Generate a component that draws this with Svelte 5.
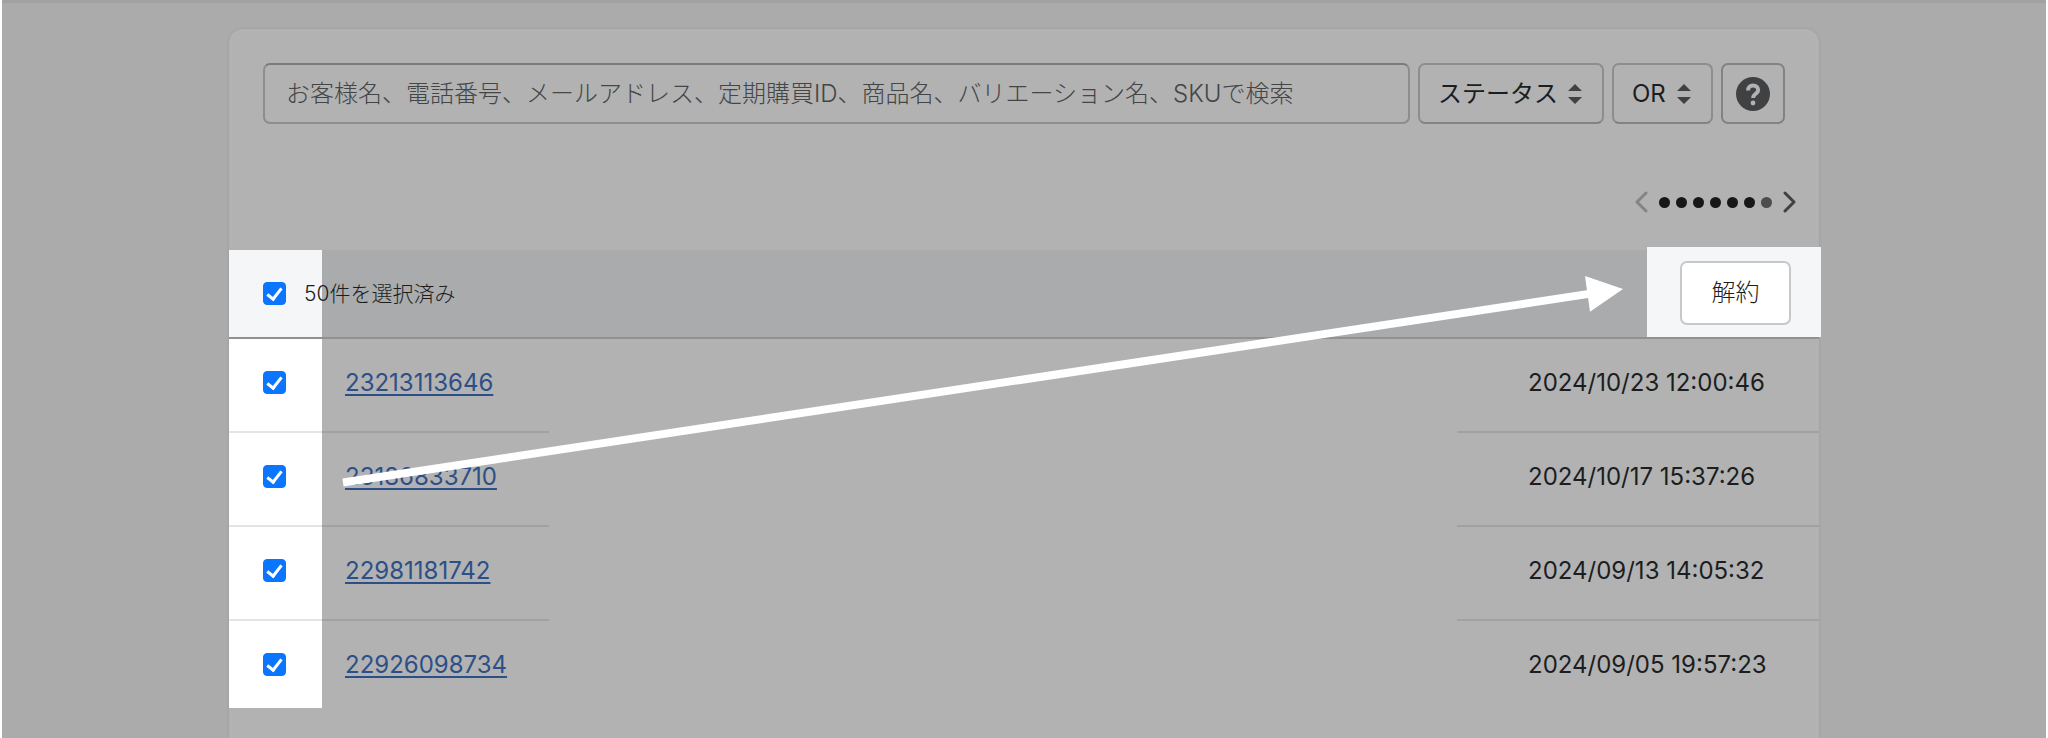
<script lang="ts">
  interface Order {
    id: string;
    date: string;
    checked: boolean;
  }

  let allChecked = $state(true);
  let query = $state('');
  let orders: Order[] = $state([
    { id: '23213113646', date: '2024/10/23 12:00:46', checked: true },
    { id: '23186833710', date: '2024/10/17 15:37:26', checked: true },
    { id: '22981181742', date: '2024/09/13 14:05:32', checked: true },
    { id: '22926098734', date: '2024/09/05 19:57:23', checked: true },
  ]);

  // last dot is the faded one
  const DOTS = [0, 1, 2, 3, 4, 5, 6];

  function toggleAll() {
    orders.forEach((o) => (o.checked = allChecked));
  }
</script>

{#snippet selectIcon()}
  <svg class="select-icon" viewBox="0 0 14 22" aria-hidden="true">
    <path d="M7 1 14 8H0zM7 21 0 14h14z" />
  </svg>
{/snippet}

<div class="page">
  <main class="card">
    <div class="filters">
      <input
        class="search"
        type="text"
        bind:value={query}
        aria-label="検索"
        placeholder="お客様名、電話番号、メールアドレス、定期購買ID、商品名、バリエーション名、SKUで検索"
      />
      <div class="select-wrap status">
        <select aria-label="ステータス"><option>ステータス</option></select>
        {@render selectIcon()}
      </div>
      <div class="select-wrap operator">
        <select aria-label="条件"><option>OR</option></select>
        {@render selectIcon()}
      </div>
      <button class="help" aria-label="ヘルプ">
        <svg viewBox="0 0 34 34" aria-hidden="true">
          <circle cx="17" cy="17" r="17" />
          <path class="mark" d="M12 13.6C12 10.4 14 8.4 17 8.4s5.2 1.8 5.2 4.6c0 3.8-5.2 3.8-5.2 8" />
          <circle class="point" cx="17" cy="26" r="2.4" />
        </svg>
      </button>
    </div>

    <nav class="pager" aria-label="ページ">
      <button class="chevron" disabled aria-label="前へ">
        <svg viewBox="0 0 14 22" aria-hidden="true"><path d="M12 2 3 11l9 9" /></svg>
      </button>
      <div class="dots">
        {#each DOTS as dot}
          <span class="dot" class:faded={dot === DOTS.length - 1}></span>
        {/each}
      </div>
      <button class="chevron" aria-label="次へ">
        <svg viewBox="0 0 14 22" aria-hidden="true"><path d="m2 2 9 9-9 9" /></svg>
      </button>
    </nav>

    <section class="list">
      <div class="bulk-bar">
        <label class="bulk-label">
          <input class="check" type="checkbox" bind:checked={allChecked} onchange={toggleAll} />
          50件を選択済み
        </label>
        <div class="bulk-action">
          <button class="cancel">解約</button>
        </div>
      </div>

      <table>
        <tbody>
          {#each orders as order}
            <tr>
              <td class="col-check">
                <input class="check" type="checkbox" bind:checked={order.checked} aria-label={order.id} />
              </td>
              <td class="col-id"><a href="#{order.id}">{order.id}</a></td>
              <td class="col-blank"></td>
              <td class="col-date">{order.date}</td>
            </tr>
          {/each}
        </tbody>
      </table>

      <svg class="arrow" viewBox="0 0 1590 459" preserveAspectRatio="none" aria-hidden="true">
        <path class="shaft" d="M114 233 1360 44" />
        <path class="head" d="M1394 39 1356 26l5 36z" />
      </svg>
    </section>
  </main>
</div>

<style>
  :global(body) {
    background: #fff;
  }

  .page {
    box-sizing: border-box;
    min-height: 100vh;
    margin: 0 2px;
    padding: 26px 24px 0;
    border-top: 3px solid #a2a2a2;
    background: #ababab;
    color: #1c1d1e;
    font-family: Inter, 'Noto Sans CJK JP', sans-serif;
    font-size: 24px;
    line-height: 32px;
  }

  .card {
    max-width: 1590px;
    margin: 0 auto;
    padding-bottom: 30px;
    border-radius: 14px 14px 0 0;
    background: #b2b2b2;
    box-shadow: 0 0 3px #9a9a9a;
  }

  .filters {
    display: flex;
    gap: 8px;
    padding: 34px 34px 0;
  }

  .search,
  select,
  .help {
    box-sizing: border-box;
    height: 61px;
    border: 2px solid #8c8d8e;
    border-radius: 7px;
    background: #b2b2b2;
    color: inherit;
    font: inherit;
  }

  .search {
    flex: 1;
    min-width: 0;
    padding: 0 21px;
    border-top-color: #7a7b7c;
  }

  .search::placeholder {
    color: #434547;
    font-weight: 300;
    opacity: 1;
  }

  .select-wrap {
    display: grid;
    align-items: center;
  }

  .select-wrap > :global(*) {
    grid-area: 1 / 1;
  }

  select {
    width: 100%;
    padding: 0 18px;
    border-bottom-color: #828384;
    appearance: none;
  }

  .status {
    width: 186px;
  }

  .operator {
    width: 101px;
  }

  .select-icon {
    justify-self: end;
    width: 14px;
    height: 22px;
    margin-right: 22px;
    fill: #404142;
    pointer-events: none;
  }

  .help {
    display: grid;
    place-items: center;
    width: 64px;
    padding: 0;
    border-color: #828384;
  }

  .help svg {
    width: 34px;
    height: 34px;
    fill: #404142;
  }

  .help .mark {
    fill: none;
    stroke: #b2b2b2;
    stroke-width: 4;
  }

  .help .point {
    fill: #b2b2b2;
  }

  .pager {
    display: flex;
    justify-content: flex-end;
    align-items: center;
    gap: 11px;
    height: 22px;
    padding: 67px 22px 37px;
  }

  .chevron {
    display: flex;
    padding: 0;
    border: 0;
    background: none;
  }

  .chevron svg {
    width: 14px;
    height: 22px;
    fill: none;
    stroke: #404142;
    stroke-width: 3;
    stroke-linecap: round;
    stroke-linejoin: round;
  }

  .chevron:disabled svg {
    stroke: #838485;
  }

  .dots {
    display: flex;
    gap: 6px;
  }

  .dot {
    width: 11px;
    height: 11px;
    border-radius: 50%;
    background: #161718;
  }

  .dot.faded {
    background: #4c4d4f;
  }

  .list {
    position: relative;
  }

  .bulk-bar {
    display: flex;
    justify-content: space-between;
    height: 87px;
    border-bottom: 2px solid #909192;
    background: linear-gradient(to right, #f4f6f8 93px, #a9abad 93px);
  }

  .bulk-label {
    display: flex;
    align-items: center;
    gap: 18px;
    padding-left: 34px;
    font-size: 21px;
    font-weight: 300;
  }

  .check {
    appearance: none;
    display: grid;
    place-items: center;
    width: 23px;
    height: 23px;
    margin: 0;
    border: 1px solid #8c8d8e;
    border-radius: 4px;
    box-sizing: border-box;
    background: #fff;
  }

  .check:checked {
    border-color: #0a75ff;
    background: #0a75ff;
  }

  .check:checked::after {
    content: '';
    box-sizing: border-box;
    width: 9px;
    height: 15px;
    margin-bottom: 3px;
    border: solid #fff;
    border-width: 0 3px 3px 0;
    rotate: 38deg;
  }

  .bulk-action {
    display: flex;
    align-items: center;
    justify-content: flex-end;
    box-sizing: border-box;
    width: 174px;
    margin: -3px -2px 0 0;
    padding: 2px 30px 0 0;
    background: #f4f6f8;
  }

  .cancel {
    width: 111px;
    height: 64px;
    padding: 0;
    border: 2px solid #c6c8ca;
    border-radius: 7px;
    background: #fff;
    color: #1c1d1e;
    font: inherit;
    font-weight: 300;
  }

  table {
    width: 100%;
    border-collapse: separate;
    border-spacing: 0;
    table-layout: fixed;
  }

  td {
    height: 64px;
    padding: 0;
    padding-top: 28px;
    border-bottom: 2px solid #a0a1a1;
    vertical-align: top;
  }

  tr:last-child td {
    height: 59px;
    border-bottom: 0;
  }

  .col-check {
    width: 59px;
    padding-left: 34px;
    border-bottom-color: #e3e4e5;
    background: #fff;
  }

  .col-check .check {
    margin-top: 4px;
  }

  .col-id {
    width: 204px;
    padding-left: 23px;
  }

  .col-id a {
    color: #2c4f88;
    text-decoration: underline;
    text-decoration-thickness: 2px;
    text-underline-offset: 3px;
  }

  .col-blank {
    border-bottom: 0;
  }

  .col-date {
    width: 291px;
    padding-left: 71px;
  }

  .arrow {
    position: absolute;
    inset: 0;
    width: 100%;
    height: 100%;
    pointer-events: none;
  }

  .shaft {
    stroke: #fff;
    stroke-width: 8;
  }

  .head {
    fill: #fff;
  }
</style>
